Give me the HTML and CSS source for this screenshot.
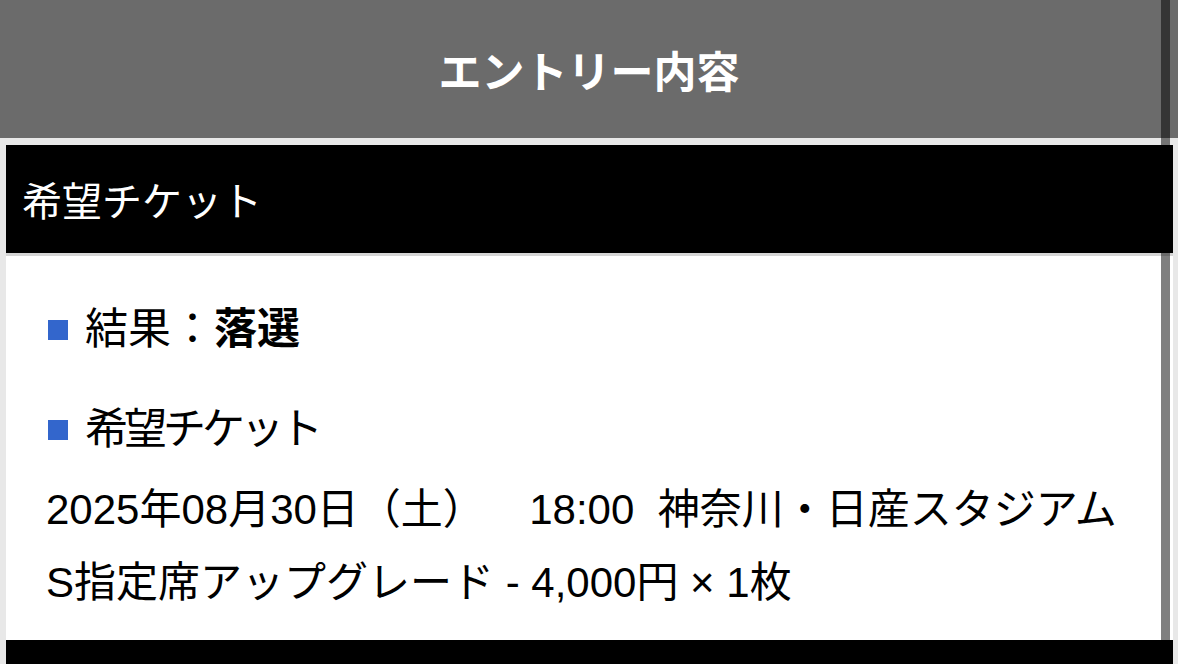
FILE: index.html
```html
<html>

<head>
    <meta charset="utf-8">
    <link rel="stylesheet" href="styles.css">
    <title>エントリー内容</title>
</head>

<body>
    <h1 class="page-title">エントリー内容</h1>

    <section class="entry">
        <h2 class="entry-head">希望チケット</h2>
        <div class="entry-body">
            <p class="item item-result"><span class="mark"></span>結果：<strong>落選</strong></p>
            <p class="item item-label"><span class="mark"></span>希望チケット</p>
            <p class="detail">2025年08月30日（土）　&nbsp;&nbsp;18:00&nbsp;&nbsp;神奈川・日産スタジアム</p>
            <p class="detail">S指定席アップグレード - 4,000円 × 1枚</p>
        </div>
    </section>
    <section class="entry">
        <h2 class="entry-head"></h2>
    </section>

    <!-- scroll thumb drawn over the page -->
    <div class="thumb"></div>
</body>

</html>
```

FILE: styles.css
```css
body {
    margin: 0;
    background-color: #e8e8e8;
    font-family: "Liberation Sans", "Noto Sans CJK JP", sans-serif;
    color: #000;
    overflow: hidden;
}

.page-title {
    margin: 0 0 7px;
    height: 138px;
    background-color: #6b6b6b;
    color: #fff;
    font-size: 43px;
    font-weight: bold;
    display: flex;
    justify-content: center;
    align-items: center;
}

.entry {
    margin: 0 5px 0 6px;
}

.entry-head {
    margin: 0;
    height: 108px;
    padding-left: 16px;
    background-color: #000;
    color: #fff;
    font-size: 40px;
    font-weight: normal;
    display: flex;
    align-items: center;
    border-bottom: solid 3px #d4d4d4;
}

.entry-body {
    background-color: #fff;
    padding: 37px 0 21px 40px;
}

.item,
.detail {
    margin: 0;
    line-height: 73px;
}

.item {
    font-size: 43px;
    display: flex;
    align-items: center;
}

.item-label {
    margin-top: 27px;
    letter-spacing: -4px;
}

.item-label+.detail {
    margin-top: 7px;
}

.mark {
    width: 20px;
    height: 20px;
    margin: 0 17px 0 2px;
    background-color: #3366cc;
}

.detail {
    font-size: 42px;
    white-space: nowrap;
}

.thumb {
    position: fixed;
    top: 0;
    left: 1161px;
    width: 9px;
    height: 100%;
    background-color: rgba(0, 0, 0, 0.5);
}
```
